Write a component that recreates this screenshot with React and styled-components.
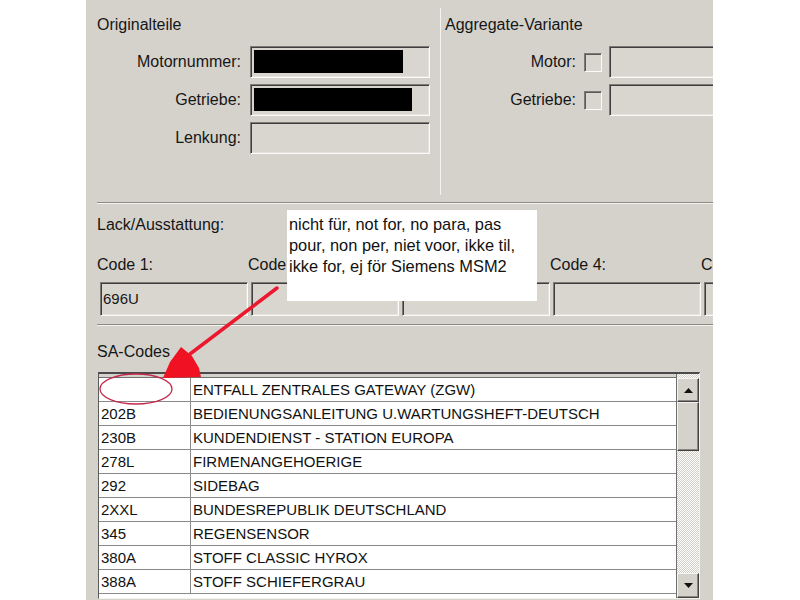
import React from 'react'
import styled, { createGlobalStyle } from 'styled-components'

const GlobalStyle = createGlobalStyle`
  html, body {
    margin: 0;
    background: #fff;
  }
  body {
    font-family: "Liberation Sans", Arial, sans-serif;
  }
`

const Panel = styled.div`
  position: relative;
  margin-left: 86px;
  width: 627px;
  height: 600px;
  overflow: hidden;
  background: #d5d2cc;
  color: #161616;
  font-size: 16px;
  line-height: 18px;
`

const TopSection = styled.section`
  display: flex;
  margin-left: 11px;
  height: 203px;
  box-sizing: border-box;
  border-bottom: 1px solid #8d8a84;
  box-shadow: 0 1px 0 #f4f3f0;
`

const Group = styled.div`
  width: ${p => p.$w}px;
  flex-shrink: 0;
  padding-top: 16px;
`

const GroupTitle = styled.div`
  margin-bottom: 12px;
  white-space: nowrap;
`

const VDivider = styled.div`
  width: 1px;
  margin: 8px 0 7px;
  background: #8d8a84;
  border-right: 1px solid #f4f3f0;
`

const FieldRows = styled.div`
  display: flex;
  flex-direction: column;
  gap: 6px;
`

const FieldRow = styled.div`
  display: flex;
  align-items: center;
  height: 32px;
`

const Label = styled.span`
  width: ${p => p.$w}px;
  flex-shrink: 0;
  text-align: right;
  white-space: nowrap;
`

const Field = styled.div`
  position: relative;
  flex-shrink: 0;
  width: ${p => p.$w}px;
  height: ${p => p.$h || 32}px;
  margin-left: ${p => p.$ml || 0}px;
  box-sizing: border-box;
  border: 1px solid;
  border-color: #7d7a75 #fbfbfa #fbfbfa #7d7a75;
  box-shadow: inset 1px 1px 0 #3e3e3e, inset -1px -1px 0 #e4e2dd;
  background: #d9d6d0;
  font-size: 15px;
  line-height: ${p => (p.$h || 32) - 2}px;
  padding-left: 2px;
  white-space: nowrap;
`

const Redacted = styled.div`
  position: absolute;
  left: 3px;
  top: 3px;
  width: ${p => p.$w}px;
  height: 23px;
  background: #000;
`

const CheckBox = styled.div`
  flex-shrink: 0;
  width: 18px;
  height: 19px;
  margin-left: 8px;
  box-sizing: border-box;
  border: 1px solid;
  border-color: #7d7a75 #fbfbfa #fbfbfa #7d7a75;
  box-shadow: inset 1px 1px 0 #595959;
  background: #d9d6d0;
`

const LackSection = styled.section`
  margin-left: 11px;
  padding-top: 13px;
  height: 122px;
  box-sizing: border-box;
  border-bottom: 1px solid #8d8a84;
  box-shadow: 0 1px 0 #f4f3f0;
`

const CodeGrid = styled.div`
  display: grid;
  grid-template-columns: repeat(5, 151px);
  margin-top: 22px;
`

const CodeCell = styled.div`
  display: flex;
  flex-direction: column;
  gap: 8px;
  white-space: nowrap;
`

const SaSection = styled.section`
  margin-left: 11px;
  padding-top: 18px;
`

const SaTitle = styled.div`
  margin-bottom: 11px;
`

const Table = styled.div`
  display: flex;
  margin-left: 1px;
  width: 602px;
  height: 227px;
  box-sizing: border-box;
  border-top: 2px solid #4a4a4a;
  border-left: 1px solid #5a5a5a;
  border-right: 1px solid #f4f3f0;
  border-bottom: 1px solid #f4f3f0;
  background: #fff;
`

const ListArea = styled.div`
  flex: 1;
  overflow: hidden;
`

const ListHeader = styled.div`
  height: 3px;
  background: #d5d2cc;
  border-bottom: 1px solid #6f6f6f;
`

const Row = styled.div`
  display: grid;
  grid-template-columns: 92px 1fr;
  height: 24px;
  box-sizing: border-box;
  border-bottom: 1px solid #8a8a8a;
  font-size: 15px;
  line-height: 23px;
  color: #111;
`

const CodeCol = styled.div`
  padding-left: 2px;
  border-right: 1px solid #8a8a8a;
`

const DescCol = styled.div`
  padding-left: 2px;
  white-space: nowrap;
`

const ScrollBar = styled.div`
  display: flex;
  flex-direction: column;
  width: 22px;
  padding-top: 4px;
  background: repeating-conic-gradient(#fff 0 25%, #d0cdc7 0 50%) 0 0 / 2px 2px;
  border-left: 1px solid #6f6f6f;
`

const ScrollPart = styled.div`
  display: flex;
  align-items: center;
  justify-content: center;
  height: ${p => p.$h}px;
  flex-shrink: 0;
  box-sizing: border-box;
  border: 1px solid;
  border-color: #f4f3f0 #404040 #404040 #f4f3f0;
  box-shadow: inset -1px -1px 0 #8a8782;
  background: #d5d2cc;
`

const Track = styled.div`
  flex: 1;
`

const Note = styled.div`
  position: absolute;
  left: 201px;
  top: 210px;
  width: 250px;
  height: 91px;
  box-sizing: border-box;
  padding: 4px 0 0 2px;
  background: #fff;
  font-size: 16.4px;
  line-height: 21px;
  color: #111;
`

const Marks = styled.svg`
  position: absolute;
  left: 0;
  top: 0;
  pointer-events: none;
`

const rows = [
  ['', 'ENTFALL ZENTRALES GATEWAY (ZGW)'],
  ['202B', 'BEDIENUNGSANLEITUNG U.WARTUNGSHEFT-DEUTSCH'],
  ['230B', 'KUNDENDIENST - STATION EUROPA'],
  ['278L', 'FIRMENANGEHOERIGE'],
  ['292', 'SIDEBAG'],
  ['2XXL', 'BUNDESREPUBLIK DEUTSCHLAND'],
  ['345', 'REGENSENSOR'],
  ['380A', 'STOFF CLASSIC HYROX'],
  ['388A', 'STOFF SCHIEFERGRAU'],
]

const codes = [
  ['Code 1:', '696U'],
  ['Code 2:', ''],
  ['Code 3:', ''],
  ['Code 4:', ''],
  ['Code 5:', ''],
]

const Arrow = ({ up }) => (
  <svg width="9" height="5" viewBox="0 0 9 5">
    <path d={up ? 'M0 5 L4.5 0 L9 5 Z' : 'M0 0 L4.5 5 L9 0 Z'} fill="#111" />
  </svg>
)

export default function App() {
  return (
    <>
      <GlobalStyle />
      <Panel>
        <TopSection>
          <Group $w={343}>
            <GroupTitle>Originalteile</GroupTitle>
            <FieldRows>
              <FieldRow>
                <Label $w={144}>Motornummer:</Label>
                <Field $w={180} $ml={9}>
                  <Redacted $w={149} />
                </Field>
              </FieldRow>
              <FieldRow>
                <Label $w={144}>Getriebe:</Label>
                <Field $w={180} $ml={9}>
                  <Redacted $w={158} />
                </Field>
              </FieldRow>
              <FieldRow>
                <Label $w={144}>Lenkung:</Label>
                <Field $w={180} $ml={9} />
              </FieldRow>
            </FieldRows>
          </Group>
          <VDivider />
          <Group $w={300} style={{ marginLeft: 4 }}>
            <GroupTitle>Aggregate-Variante</GroupTitle>
            <FieldRows>
              <FieldRow>
                <Label $w={131}>Motor:</Label>
                <CheckBox />
                <Field $w={160} $ml={7} />
              </FieldRow>
              <FieldRow>
                <Label $w={131}>Getriebe:</Label>
                <CheckBox />
                <Field $w={160} $ml={7} />
              </FieldRow>
            </FieldRows>
          </Group>
        </TopSection>

        <LackSection>
          <div>Lack/Ausstattung:</div>
          <CodeGrid>
            {codes.map(([label, value]) => (
              <CodeCell key={label}>
                <span>{label}</span>
                <Field $w={148} $h={34} $ml={3}>
                  {value}
                </Field>
              </CodeCell>
            ))}
          </CodeGrid>
        </LackSection>

        <SaSection>
          <SaTitle>SA-Codes</SaTitle>
          <Table>
            <ListArea>
              <ListHeader />
              {rows.map(([code, desc], i) => (
                <Row key={i}>
                  <CodeCol>{code}</CodeCol>
                  <DescCol>{desc}</DescCol>
                </Row>
              ))}
            </ListArea>
            <ScrollBar>
              <ScrollPart $h={24}>
                <Arrow up />
              </ScrollPart>
              <ScrollPart $h={49} />
              <Track />
              <ScrollPart $h={25}>
                <Arrow />
              </ScrollPart>
            </ScrollBar>
          </Table>
        </SaSection>

        <Note>
          nicht für, not for, no para, pas
          <br />
          pour, non per, niet voor, ikke til,
          <br />
          ikke for, ej för Siemens MSM2
        </Note>

        <Marks width="627" height="600" viewBox="86 0 627 600">
          <line
            x1="277"
            y1="288"
            x2="190"
            y2="354"
            stroke="#ec1830"
            strokeWidth="3.5"
            strokeLinecap="round"
          />
          <polygon
            points="181,347 192,356 199,368 201,377 163,378 170,362"
            fill="#f01222"
          />
          <ellipse
            cx="136"
            cy="389"
            rx="36"
            ry="15"
            fill="none"
            stroke="#c32a4c"
            strokeWidth="1.3"
          />
        </Marks>
      </Panel>
    </>
  )
}
